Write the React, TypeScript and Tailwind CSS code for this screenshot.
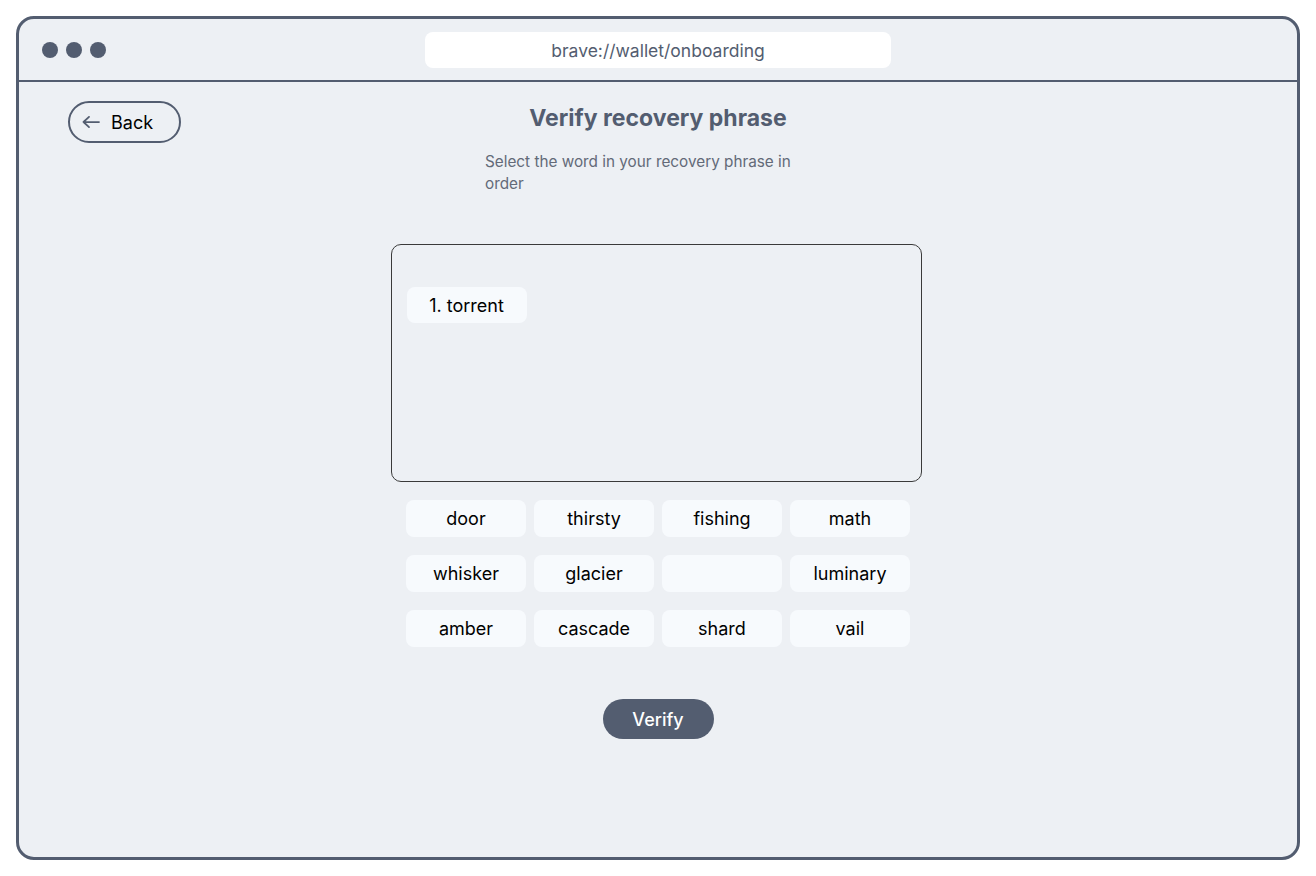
const words = [
  "door",
  "thirsty",
  "fishing",
  "math",
  "whisker",
  "glacier",
  "",
  "luminary",
  "amber",
  "cascade",
  "shard",
  "vail",
];

export default function App() {
  return (
    <div
      className="min-h-screen bg-white p-4 text-black"
      style={{ fontFamily: "Inter, 'Noto Sans', sans-serif" }}
    >
      <div className="flex h-[844px] w-[1284px] flex-col overflow-hidden rounded-[18px] border-[3px] border-[#535d70] bg-[#edf0f4]">
        {/* Browser chrome */}
        <div className="grid h-[63px] shrink-0 grid-cols-[1fr_466px_1fr] items-center border-b-2 border-[#535d70]">
          <div className="flex gap-2 pl-[23px]">
            <span className="h-4 w-4 rounded-full bg-[#535d70]" />
            <span className="h-4 w-4 rounded-full bg-[#535d70]" />
            <span className="h-4 w-4 rounded-full bg-[#535d70]" />
          </div>
          <div className="flex h-9 items-center justify-center rounded-lg bg-white pt-[3px] text-[17.5px] text-[#535d70]">
            brave://wallet/onboarding
          </div>
          <div />
        </div>

        {/* Page */}
        <div className="flex flex-col items-center pt-[19px]">
          <div className="grid w-full grid-cols-[1fr_auto_1fr] items-start">
            <div className="pl-[49px]">
              <button className="flex h-[42px] w-[113px] items-center gap-[11px] rounded-full border-2 border-[#535d70] pl-[12px] text-[18px]">
                <svg width="18" height="12" viewBox="0 0 18 12" fill="none" stroke="#535d70" strokeWidth="1.75" strokeLinecap="round" strokeLinejoin="round">
                  <path d="M17 6H1.5M7 0.9L1.5 6L7 11.1" />
                </svg>
                Back
              </button>
            </div>
            <h1 className="pt-[1px] text-[23px] leading-8 font-bold text-[#535d70]">
              Verify recovery phrase
            </h1>
            <div />
          </div>

          <p className="mt-2 w-[346px] text-[15.3px] leading-[22px] text-[#636a78]">
            Select the word in your recovery phrase in order
          </p>

          <div className="mt-[49px] mr-[4px] h-[238px] w-[531px] rounded-[10px] border border-[#3a3a3a] pt-[42px] pl-[15px]">
            <div className="flex h-9 w-[120px] items-center justify-center rounded-lg bg-[#f7fafd] text-[18px]">
              1. torrent
            </div>
          </div>

          <div className="mt-[18px] grid grid-cols-[repeat(4,120px)] gap-x-2 gap-y-[18px]">
            {words.map((w, i) => (
              <div
                key={i}
                className="flex h-[37px] items-center justify-center rounded-lg bg-[#f7fafd] text-[18px]"
              >
                {w}
              </div>
            ))}
          </div>

          <button className="mt-[52px] h-10 w-[111px] rounded-full bg-[#535d70] text-[18px] font-medium text-white">
            Verify
          </button>
        </div>
      </div>
    </div>
  );
}
